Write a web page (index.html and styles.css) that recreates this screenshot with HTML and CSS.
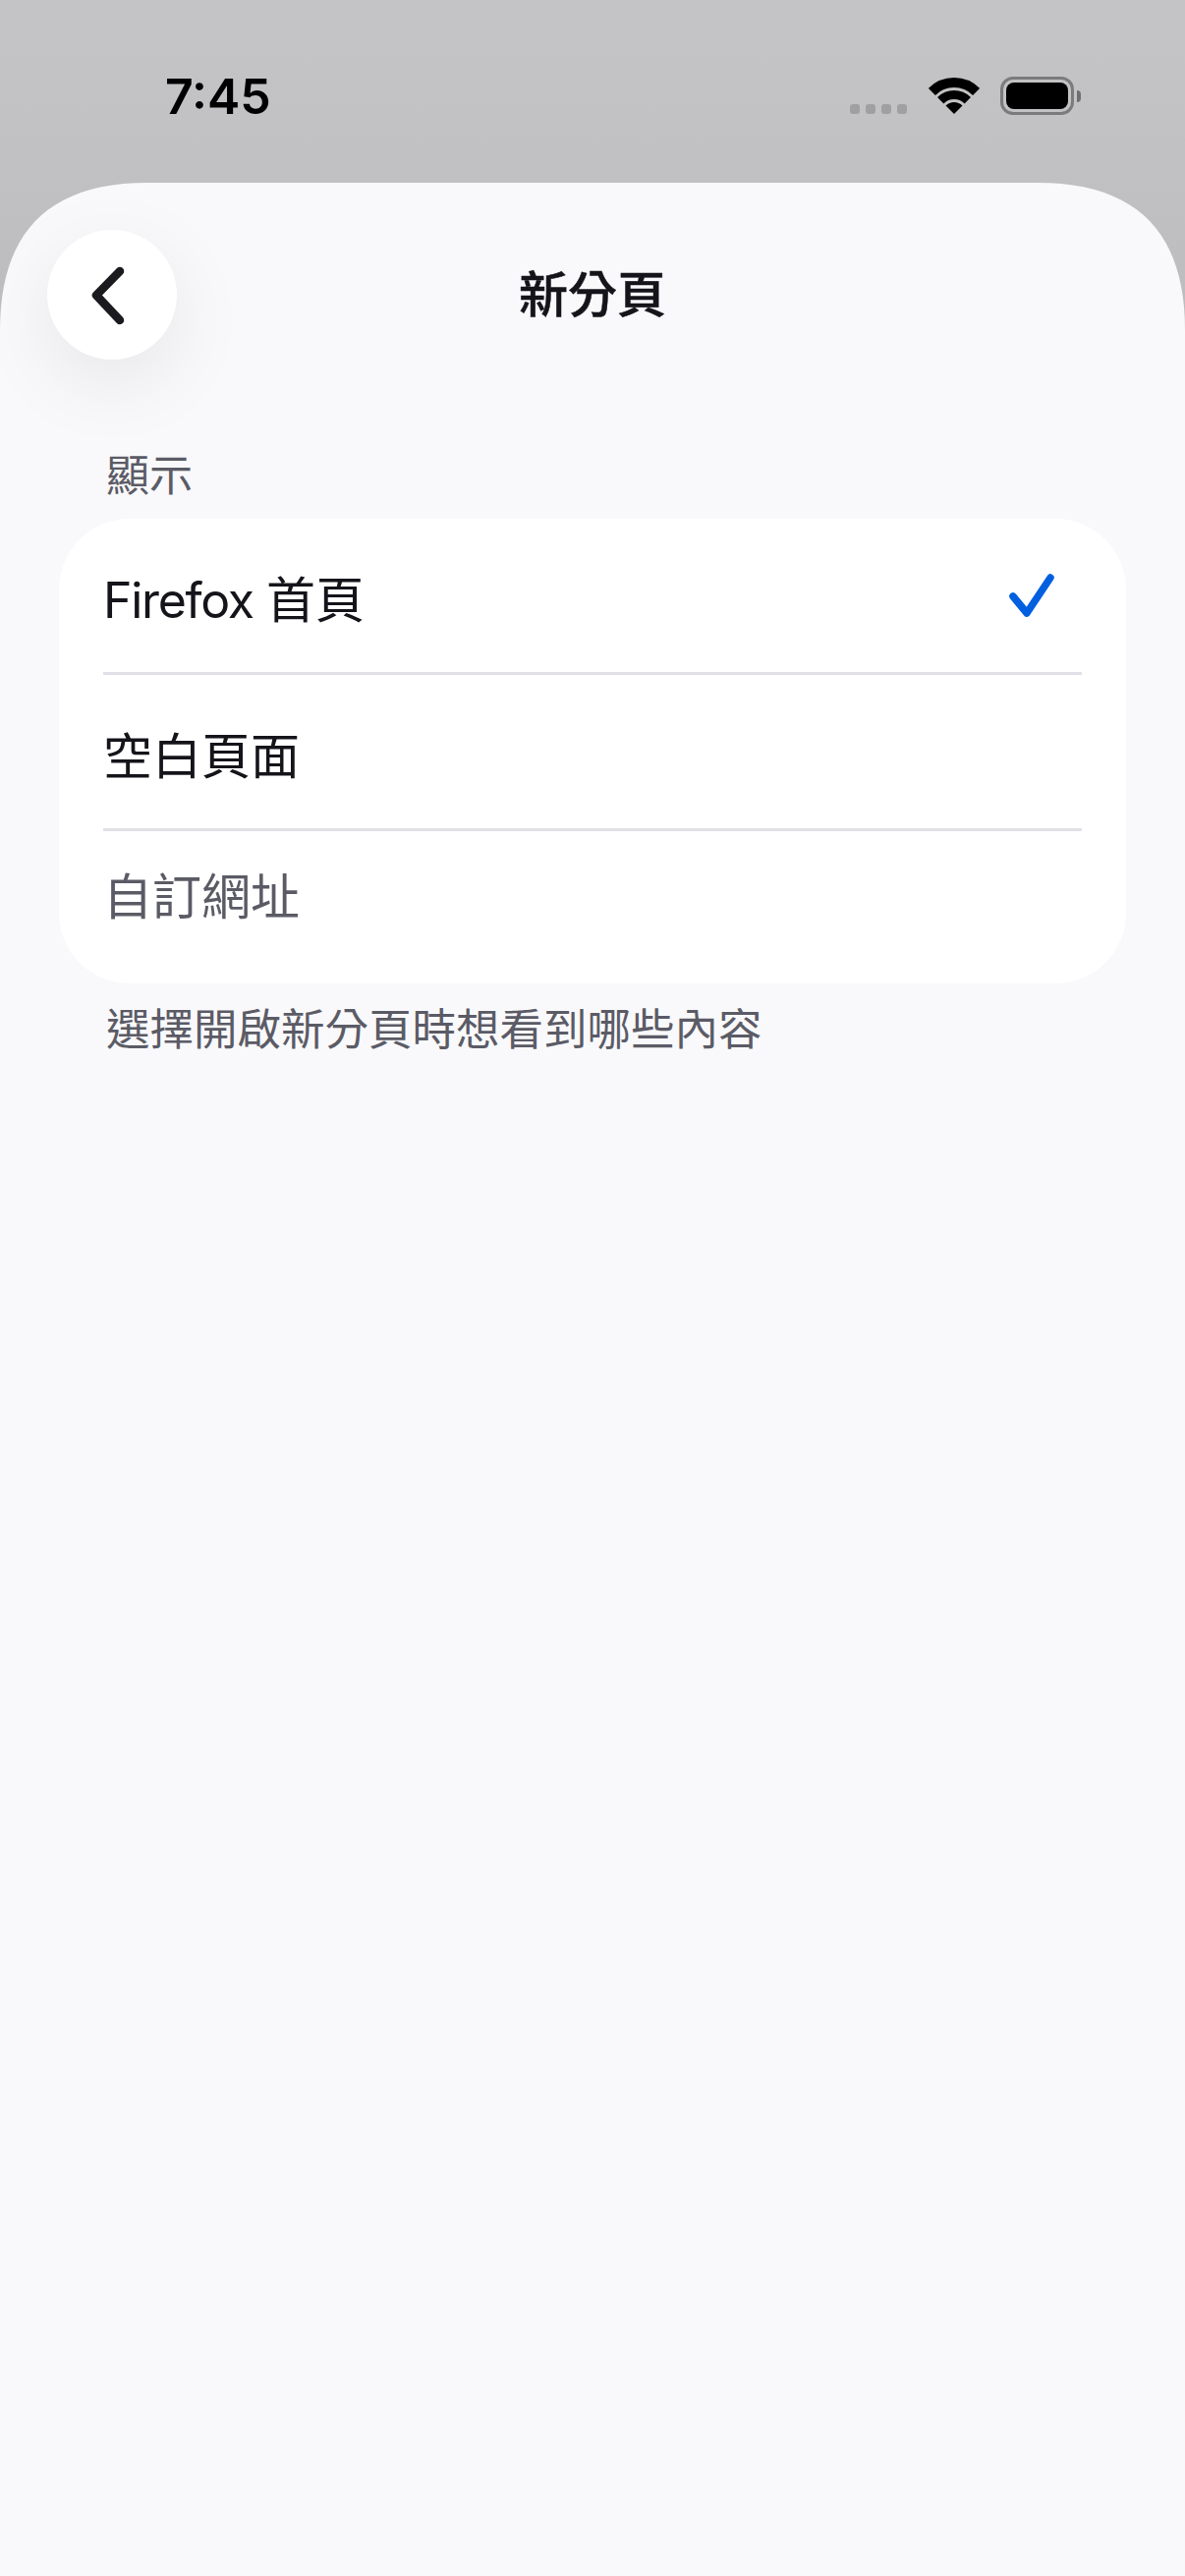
FILE: index.html
```html
<!DOCTYPE html>
<html lang="zh-Hant">

<head>
  <meta charset="UTF-8">
  <meta name="viewport" content="width=device-width, initial-scale=1.0">
  <title>新分頁</title>
  <link rel="stylesheet" href="styles.css">
</head>

<body>
  <div class="status-bar">
    <span class="time">7:45</span>
    <div class="status-icons">
      <div class="signal">
        <span></span><span></span><span></span><span></span>
      </div>
      <svg class="wifi" width="52" height="38" viewBox="0 0 52 38">
        <path d="M3.4 14.4A32 32 0 0 1 48.6 14.4" fill="none" stroke="#000" stroke-width="10"/>
        <path d="M12.2 23.2A19.5 19.5 0 0 1 39.8 23.2" fill="none" stroke="#000" stroke-width="9"/>
        <path d="M17.5 28.5A12 12 0 0 1 34.5 28.5L26 37Z" fill="#000"/>
      </svg>
      <div class="battery">
        <div class="battery-body"><div class="battery-level"></div></div>
        <div class="battery-nub"></div>
      </div>
    </div>
  </div>

  <main class="sheet">
    <header class="nav">
      <button class="back">
        <svg width="132" height="132" viewBox="0 0 132 132">
          <path d="M74 42L50 66.5L74 92" fill="none" stroke="#1b1b1f" stroke-width="8.5" stroke-linecap="round" stroke-linejoin="round"/>
        </svg>
      </button>
      <h1 class="title">新分頁</h1>
    </header>

    <section class="group">
      <h2 class="group-label">顯示</h2>
      <div class="card">
        <div class="row">
          <span><span class="brand">Firefox</span> 首頁</span>
          <svg class="check" width="46" height="44" viewBox="0 0 46 44">
            <path d="M4 23L18 40L42 4" fill="none" stroke="#0060df" stroke-width="7.5" stroke-linecap="round" stroke-linejoin="round"/>
          </svg>
        </div>
        <div class="row">
          <span>空白頁面</span>
        </div>
        <div class="row row-input">
          <span>自訂網址</span>
        </div>
      </div>
      <p class="group-note">選擇開啟新分頁時想看到哪些內容</p>
    </section>
  </main>
</body>

</html>
```

FILE: styles.css
```css
* {
  box-sizing: border-box;
}

html,
body {
  height: 100%;
}

body {
  margin: 0;
  display: flex;
  flex-direction: column;
  overflow: hidden;
  font-family: Inter, "Noto Sans CJK TC", sans-serif;
  color: #15141a;
  background: linear-gradient(#c4c4c6 0, #c2c2c4 130px, #bcbcbe 330px);
}

.status-bar {
  flex: none;
  height: 186px;
  display: flex;
  justify-content: space-between;
  padding: 68px 106px 0 168px;
}

.time {
  font-size: 50px;
  line-height: 60px;
  font-weight: 600;
  color: #000;
}

.status-icons {
  display: flex;
  align-items: flex-end;
  gap: 22px;
  height: 49px;
}

.signal {
  display: flex;
  gap: 6px;
  margin-bottom: 1px;
}

.signal span {
  width: 10px;
  height: 10px;
  border-radius: 3px;
  background-color: #a0a0a2;
}

.wifi {
  display: block;
  margin-right: -1px;
}

.battery {
  display: flex;
  align-items: center;
  gap: 3px;
}

.battery-body {
  width: 75px;
  height: 39px;
  padding: 3px;
  border: 3px solid #7b7b7d;
  border-radius: 13px;
}

.battery-level {
  height: 100%;
  border-radius: 8px;
  background-color: #000;
}

.battery-nub {
  width: 4px;
  height: 12px;
  border-radius: 0 6px 6px 0;
  background-color: #6e6e70;
}

/* iOS sheet corners are not quite circular, so a curve instead of border-radius */
.sheet {
  flex: 1;
  background-color: #f9f9fb;
  clip-path: path("M0 150C0 50 50 0 150 0H1056C1156 0 1206 50 1206 150V2436H0Z");
  padding-top: 48px;
}

.nav {
  display: grid;
  grid-template-columns: 132px 1fr 132px;
  align-items: center;
  padding: 0 48px;
}

.back {
  width: 132px;
  height: 132px;
  padding: 0;
  border: none;
  border-radius: 50%;
  background-color: #fff;
  box-shadow: 0 24px 80px rgba(0, 0, 0, 0.08);
}

.back svg {
  display: block;
}

.title {
  margin: 0;
  text-align: center;
  font-size: 50px;
  line-height: 60px;
  font-weight: 500;
  -webkit-text-stroke: 0.5px #15141a;
}

.group {
  padding: 0 60px;
  margin-top: 90px;
}

.group-label {
  margin: 0 0 16px 48px;
  font-size: 44px;
  line-height: 56px;
  font-weight: 400;
  color: #5b5b66;
}

.card {
  border-radius: 72px;
  background-color: #fff;
}

.row {
  height: 159px;
  margin: 0 45px;
  padding-top: 2px;
  padding-right: 28px;
  display: flex;
  justify-content: space-between;
  align-items: center;
  border-bottom: 3px solid #e0e0e6;
  font-size: 50px;
  word-spacing: -1px;
}

.row-input {
  height: 155px;
  border-bottom: none;
  padding-top: 0;
  padding-bottom: 30px;
  color: #5b5b66;
}

.brand {
  letter-spacing: -1.3px;
}

.check {
  display: block;
  margin-top: -2px;
}

.group-note {
  margin: 20px 0 0 48px;
  font-size: 44.5px;
  line-height: 54px;
  color: #5b5b66;
}
```
